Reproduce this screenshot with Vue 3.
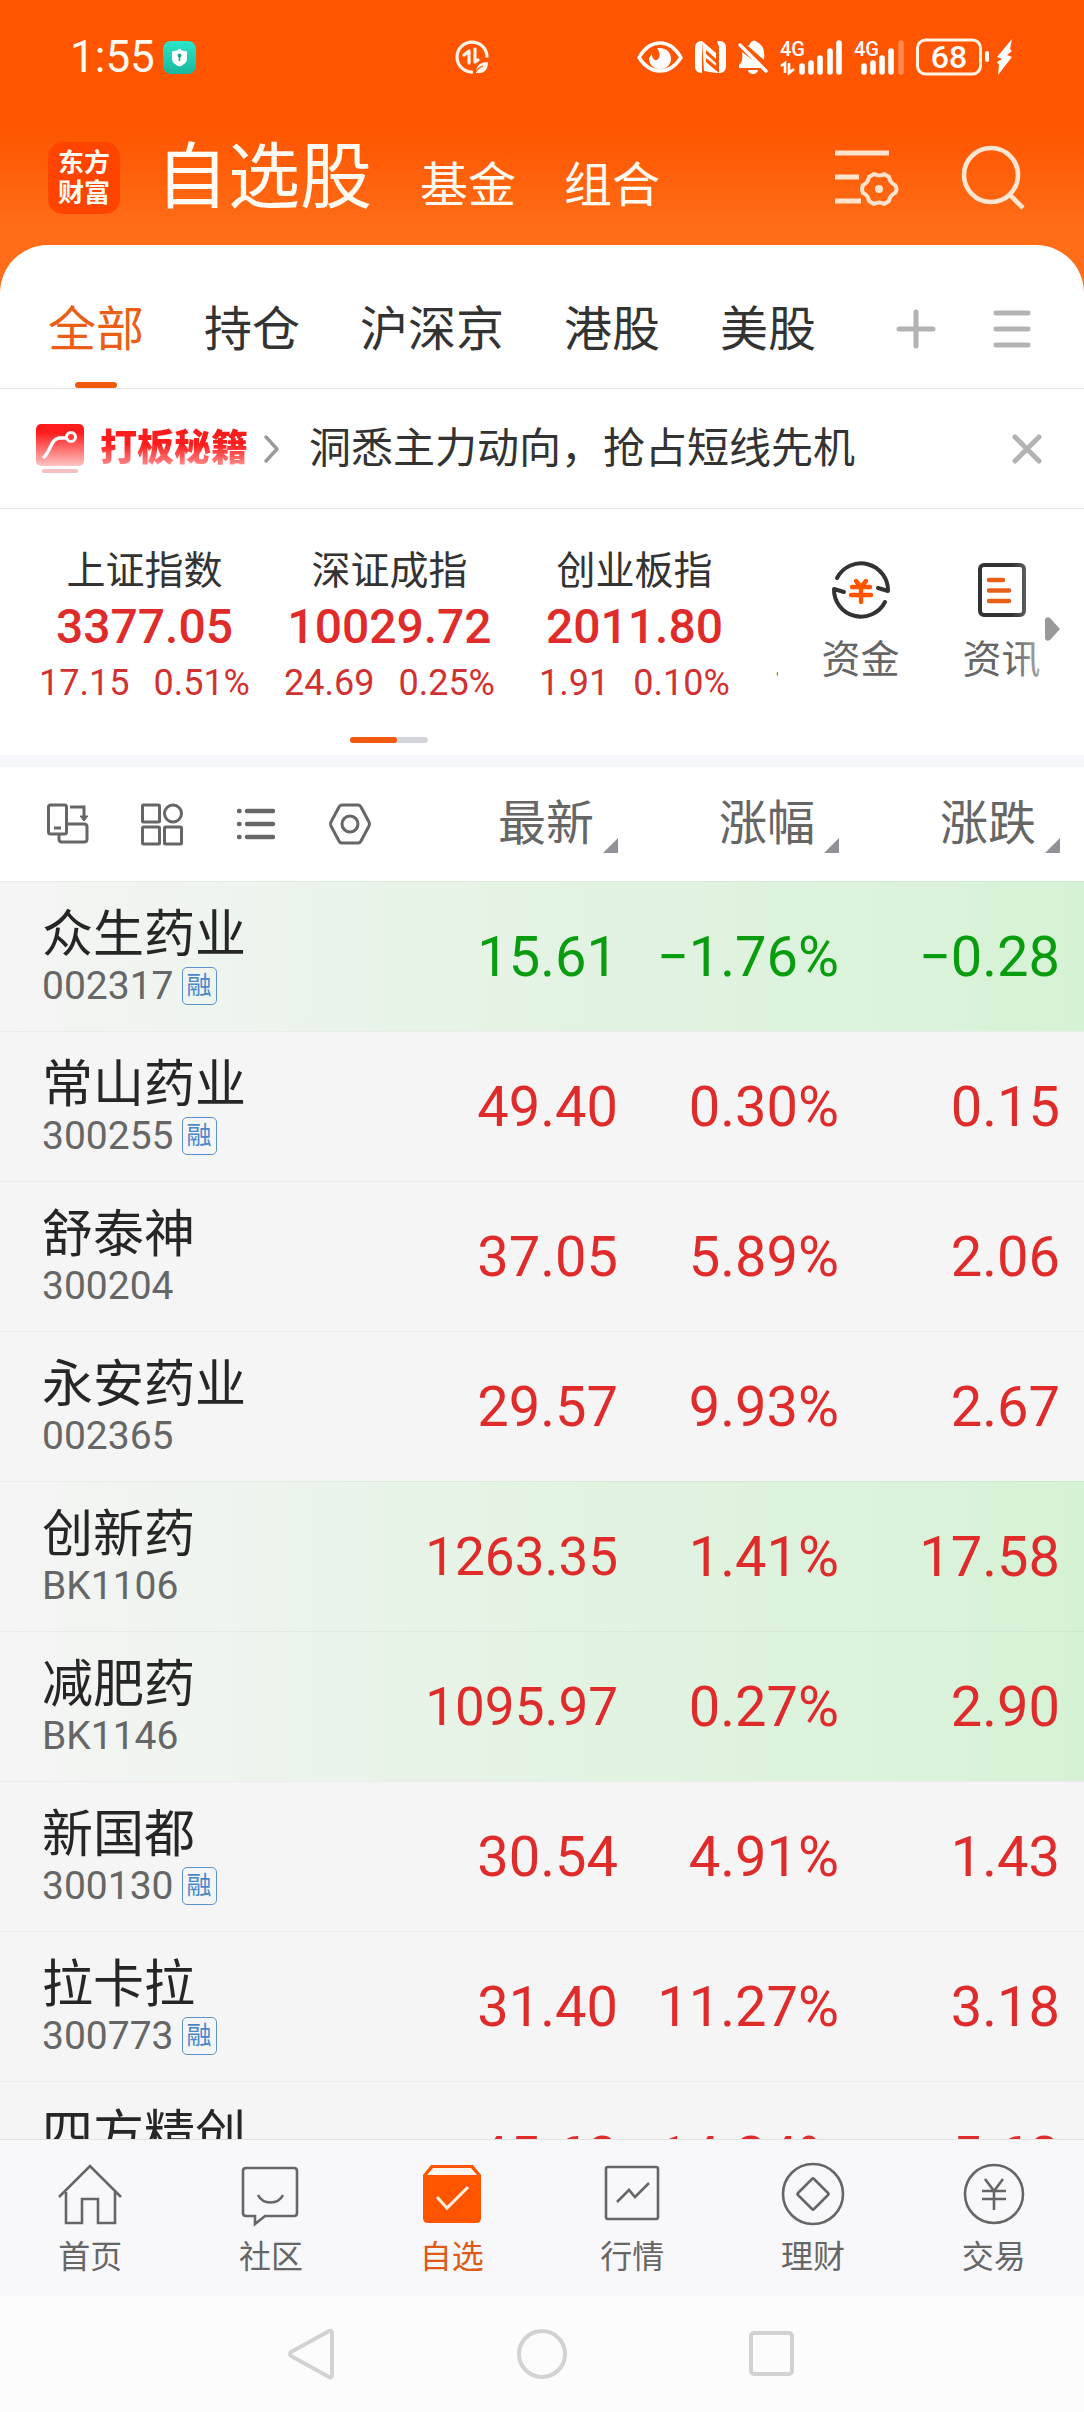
<template>
  <div class="page">
    <header class="top">
      <div class="status">
        <span class="clock">1:55</span>
        <svg class="guard" width="33" height="33" viewBox="0 0 33 33">
          <defs>
            <linearGradient id="guard-bg" x1="0" y1="0" x2="0" y2="1">
              <stop offset="0" stop-color="#2ce6cb" />
              <stop offset="1" stop-color="#17b79c" />
            </linearGradient>
          </defs>
          <rect width="33" height="33" rx="8" fill="url(#guard-bg)" />
          <path d="M16.5 7.5l2.5 2 5 1v7c0 4-3.500 6.500-7.500 8-4-1.500-7.500-4-7.500-8v-7l5-1z" fill="#fff" />
          <circle cx="16.500" cy="14.500" r="2" fill="#17a88f" />
          <path d="M16.500 15v5" stroke="#17a88f" stroke-width="1.600" />
        </svg>
        <svg class="saver" width="34" height="34" viewBox="0 0 34 34" fill="none" stroke="#fff5ea" stroke-width="3.200">
          <path d="M32 17.500A15 15 0 1 0 18 32" />
          <path d="M9 15l5-4v12M20 9v13l3-2" stroke-linejoin="round" stroke-linecap="round" />
          <path d="M21 32c0-6 4-10 12-10 0 8-4 12-12 11z" fill="#fff5ea" stroke="none" />
          <path d="M20 33c2-4 5-6 8-7" stroke="#ff5500" stroke-width="1.300" />
        </svg>
        <div class="status-right">
          <svg width="46" height="32" viewBox="0 0 46 32">
            <path d="M2 16.500C8 6 15 2 23 2s15 4 21 14.500C38 26 31 30 23 30S8 26 2 16.500z" fill="none" stroke="#fff" stroke-width="3.400" stroke-linejoin="round" />
            <path d="M20 7c10-1 14 5 14 11 0 5-4 10-11 10s-11-5-11-11l3-4c0 4 2 6 4 6 4 0 5-7 1-12z" fill="#fff" />
          </svg>
          <svg width="31" height="32" viewBox="0 0 31 32">
            <path d="M6 0h1v32H6a6 6 0 0 1-6-6V6a6 6 0 0 1 6-6zM22 0h3a6 6 0 0 1 6 6v20a6 6 0 0 1-6 6h-1V6z" fill="#fff" />
            <path d="M7 0l14 12v6L11 9v4l10 9v3l-10-8v4l13 11h-3L9 30z" fill="#fff" />
          </svg>
          <svg width="30" height="34" viewBox="0 0 30 34">
            <path d="M4 12l21 16H1v-3c3-2 4-7 3-13zM10 6c2-1 2-3 3-4 2-2 4-2 6 0 6 3 8 8 7 18zM10 30h10a5 4 0 0 1-10 0z" fill="#fff" />
            <path d="M2 5l26 26" stroke="#fff" stroke-width="3.400" stroke-linecap="round" />
          </svg>
          <svg width="62" height="36" viewBox="0 0 62 36">
            <text x="0" y="17" class="net">4G</text>
            <path d="M1 27l4-3v10M9 24v10l5-4" fill="none" stroke="#fff" stroke-width="2.600" />
            <path d="M22 27v6M31 24v9M40 19v14M50 12v21M59 4v29" stroke="#fff" stroke-width="5.600" stroke-linecap="round" />
          </svg>
          <svg width="50" height="36" viewBox="0 0 50 36">
            <text x="0" y="17" class="net">4G</text>
            <path d="M10 27v6M19 24v9M28 19v14M37 12v21" stroke="#fff" stroke-width="5.600" stroke-linecap="round" />
            <path d="M47 4v29" stroke="#fff" stroke-opacity=".3" stroke-width="5.600" stroke-linecap="round" />
          </svg>
          <svg width="74" height="38" viewBox="0 0 74 38">
            <rect x="1.500" y="2" width="63" height="34" rx="8" fill="none" stroke="#fff3e6" stroke-width="3" />
            <rect x="69" y="13" width="4" height="11" rx="2" fill="#fff" />
            <text x="33" y="30" class="level">68</text>
          </svg>
          <svg class="bolt" width="17" height="38" viewBox="0 0 17 38">
            <path d="M16 1L1 19l5 2-5 3 2 3-1 10 14-18-5-2 5-4-2-2z" fill="#fff" />
          </svg>
        </div>
      </div>

      <div class="titlebar">
        <span class="logo">东方<br />财富</span>
        <nav class="titles">
          <a href="#" class="title current">自选股</a>
          <a href="#" class="title">基金</a>
          <a href="#" class="title">组合</a>
        </nav>
        <div class="title-actions">
          <button type="button" aria-label="设置">
            <svg width="64" height="64" viewBox="0 0 64 64" fill="none" stroke="#ffe3cd" stroke-width="5">
              <path d="M1 7h54M1 31h24M1 55h26" />
              <path d="M40 28q6 3 10 0l5 3q1 6 6 8 3 4 0 8-5 2-6 8l-5 3q-5-3-10 0l-5-3q-1-6-6-8-2-4 0-8 5-2 6-8z" stroke-width="4" stroke-linejoin="round" />
              <circle cx="45" cy="43" r="4" fill="#ffe3cd" stroke="none" />
            </svg>
          </button>
          <button type="button" aria-label="搜索">
            <svg width="64" height="64" viewBox="0 0 64 64" fill="none" stroke="#ffe6d2" stroke-width="4.600">
              <circle cx="31" cy="29" r="27" />
              <path d="M49 48l14 14" />
            </svg>
          </button>
        </div>
      </div>
    </header>

    <main class="panel">
      <nav class="tabs">
        <button
          v-for="tab in tabs"
          :key="tab"
          type="button"
          class="tab"
          :class="{ active: tab === activeTab }"
          @click="activeTab = tab"
        >
          {{ tab }}
        </button>
        <div class="tab-actions">
          <button type="button" aria-label="添加分组">
            <svg width="40" height="40" viewBox="0 0 40 40" class="line-icon">
              <path d="M20 3v34M3 20h34" />
            </svg>
          </button>
          <button type="button" aria-label="分组管理">
            <svg width="40" height="40" viewBox="0 0 40 40" class="line-icon">
              <path d="M4 4h32M4 20h32M4 36h32" />
            </svg>
          </button>
        </div>
      </nav>

      <div v-if="showBanner" class="banner">
        <a href="#" class="banner-link">
          <svg width="48" height="49" viewBox="0 0 48 49">
            <defs>
              <linearGradient id="tip-bg" x1="0" y1="0" x2="0" y2="1">
                <stop offset=".2" stop-color="#ff1c1c" />
                <stop offset="1" stop-color="#ffc4c4" />
              </linearGradient>
            </defs>
            <rect width="48" height="42" rx="5" fill="url(#tip-bg)" />
            <path d="M8 33c7-6 6-17 15-19h8" fill="none" stroke="#fff" stroke-width="3.400" stroke-linecap="round" />
            <circle cx="35" cy="13" r="4.500" fill="#ff3b3b" stroke="#fff" stroke-width="3" />
            <rect x="6" y="45" width="36" height="4" rx="2" fill="#f7bfc1" />
          </svg>
          <span class="banner-brand">打板秘籍</span>
          <svg width="15" height="28" viewBox="0 0 15 28" fill="none" stroke="#999" stroke-width="3.400" stroke-linecap="round" stroke-linejoin="round">
            <path d="M2 2l11 12L2 26" />
          </svg>
          <span class="banner-text">洞悉主力动向，抢占短线先机</span>
        </a>
        <button type="button" aria-label="关闭" @click="showBanner = false">
          <svg width="30" height="30" viewBox="0 0 30 30" class="line-icon">
            <path d="M3 3l24 24M27 3L3 27" />
          </svg>
        </button>
      </div>

      <section class="market">
        <div class="indices">
          <div class="index-list">
            <a v-for="item in indices" :key="item.name" href="#" class="index">
              <span class="index-name">{{ item.name }}</span>
              <span class="index-value">{{ item.value }}</span>
              <span class="index-change">
                <span>{{ item.change }}</span>
                <span>{{ item.percent }}</span>
              </span>
            </a>
          </div>
          <div class="pager"><span></span></div>
        </div>
        <div class="shortcuts">
          <a href="#" class="shortcut">
            <svg width="58" height="58" viewBox="0 0 58 58" fill="none" stroke-linecap="round" stroke-linejoin="round">
              <path d="M5 17A27 27 0 0 1 56 30l-10-3M53 41A27 27 0 0 1 2 28l10 3" stroke="#333" stroke-width="4" />
              <path d="M24 20l5 6 5-6M20 26h18M19 34h20M29 26v15" stroke="#ff5500" stroke-width="4.400" />
            </svg>
            <span>资金</span>
          </a>
          <a href="#" class="shortcut">
            <svg width="58" height="58" viewBox="0 0 58 58" fill="none">
              <rect x="7" y="4" width="44" height="50" rx="4" stroke="#333" stroke-width="4" />
              <path d="M16 19h14M16 29.500h20M16 40h20" stroke="#e6601a" stroke-width="4.400" stroke-linecap="round" />
            </svg>
            <span>资讯</span>
          </a>
          <svg class="more" width="15" height="24" viewBox="0 0 15 24">
            <path d="M0 2q2-3 5-1l10 11L5 23q-3 2-5-1z" fill="#999" />
          </svg>
        </div>
      </section>

      <div class="quotes">
        <table>
          <colgroup>
            <col />
            <col class="col-num" />
            <col class="col-num" />
            <col class="col-last" />
          </colgroup>
          <thead>
            <tr>
              <th>
                <div class="tools">
                  <button type="button" aria-label="横屏">
                    <svg width="42" height="42" viewBox="0 0 42 42" class="tool-icon">
                      <rect x="1.500" y="2" width="18" height="29" rx="2" />
                      <path d="M7 25h7M12 31v5q0 3 3 3h22q3 0 3-3V24q0-3-3-3H20M23 4h14v11" />
                      <path d="M33 13h8l-4 5z" fill="#666" stroke-width="1" />
                    </svg>
                  </button>
                  <button type="button" aria-label="宫格">
                    <svg width="42" height="42" viewBox="0 0 42 42" class="tool-icon">
                      <rect x="1.500" y="2" width="17" height="17" rx="1" />
                      <circle cx="32" cy="10.500" r="8.500" />
                      <rect x="1.500" y="24" width="17" height="17" rx="1" />
                      <rect x="23.500" y="24" width="17" height="17" rx="1" />
                    </svg>
                  </button>
                  <button type="button" aria-label="列表">
                    <svg width="42" height="42" viewBox="0 0 42 42" class="tool-icon round">
                      <path d="M12 8h26M12 21h26M12 34h26M4 8h.5M4 21h.5M4 34h.5" />
                    </svg>
                  </button>
                  <button type="button" aria-label="表头设置">
                    <svg width="42" height="42" viewBox="0 0 42 42" class="tool-icon">
                      <path d="M13 2h16q2 0 3 2l8 15q1 2 0 4l-8 15q-1 2-3 2H13q-2 0-3-2L2 23q-1-2 0-4l8-15q1-2 3-2z" />
                      <circle cx="21" cy="21" r="8" />
                    </svg>
                  </button>
                </div>
              </th>
              <th v-for="column in columns" :key="column" scope="col">
                <button type="button" class="sort">
                  {{ column }}
                  <svg width="15" height="15" viewBox="0 0 15 15"><path d="M15 0v15H0z" fill="#919197" /></svg>
                </button>
              </th>
            </tr>
          </thead>
          <tbody>
            <tr v-for="stock in stocks" :key="stock.code" :class="{ flash: stock.flash, down: stock.down }">
              <td>
                <div class="stock-name">{{ stock.name }}</div>
                <div class="stock-code">
                  {{ stock.code }}
                  <span v-if="stock.margin" class="badge">融</span>
                </div>
              </td>
              <td class="num" :class="{ long: stock.price.length > 6 }">{{ stock.price }}</td>
              <td class="num">{{ stock.percent }}</td>
              <td class="num">{{ stock.change }}</td>
            </tr>
          </tbody>
        </table>
      </div>
    </main>

    <nav class="bottom-nav">
      <a href="#">
        <svg width="64" height="64" viewBox="0 0 64 64" class="nav-icon">
          <path d="M1 35L32 4l31 31M8 30v31h16V37h16v24h17V30" />
        </svg>
        首页
      </a>
      <a href="#">
        <svg width="64" height="64" viewBox="0 0 64 64" class="nav-icon">
          <path d="M7 6h48q3 0 3 3v42q0 3-3 3H26l-10 8v-8H7q-3 0-3-3V9q0-3 3-3z" />
          <path d="M19 33c5 10 20 10 25 0" />
        </svg>
        社区
      </a>
      <a href="#" class="current">
        <svg width="64" height="64" viewBox="0 0 64 64">
          <path d="M11 3h42l8 10v43q0 5-5 5H8q-5 0-5-5V13z" fill="#ff5500" />
          <path d="M13 6h38l6 7H7z" fill="#fff6ee" />
          <path d="M17 35l10 11 21-21" fill="none" stroke="#fff0e2" stroke-width="3" />
        </svg>
        自选
      </a>
      <a href="#">
        <svg width="64" height="64" viewBox="0 0 64 64" class="nav-icon">
          <rect x="6" y="5" width="52" height="52" rx="2" />
          <path d="M17 40l12-12 6 7 14-14" />
        </svg>
        行情
      </a>
      <a href="#">
        <svg width="64" height="64" viewBox="0 0 64 64" class="nav-icon">
          <circle cx="32" cy="32" r="30" />
          <path d="M31 17q1-1 2 0l14 14q1 1 0 2L33 47q-1 1-2 0L17 33q-1-1 0-2z" />
        </svg>
        理财
      </a>
      <a href="#">
        <svg width="64" height="64" viewBox="0 0 64 64" class="nav-icon">
          <circle cx="32" cy="32" r="29" />
          <path d="M23 17l9 12 9-12M20 29h24M20 37h24M32 28v20" />
        </svg>
        交易
      </a>
    </nav>

    <div class="system-bar">
      <button type="button" aria-label="返回">
        <svg width="50" height="50" viewBox="0 0 50 50"><path d="M42 2q3-1 3 2v42q0 3-3 2L4 27q-2-2 0-4z" /></svg>
      </button>
      <button type="button" aria-label="主屏幕">
        <svg width="50" height="50" viewBox="0 0 50 50"><circle cx="25" cy="25" r="23" /></svg>
      </button>
      <button type="button" aria-label="最近任务">
        <svg width="50" height="50" viewBox="0 0 50 50"><rect x="4" y="4" width="41" height="41" rx="3" /></svg>
      </button>
    </div>
  </div>
</template>

<script setup>
import { ref } from "vue"

const tabs = ["全部", "持仓", "沪深京", "港股", "美股"]
const activeTab = ref("全部")
const showBanner = ref(true)

const indices = [
  { name: "上证指数", value: "3377.05", change: "17.15", percent: "0.51%" },
  { name: "深证成指", value: "10029.72", change: "24.69", percent: "0.25%" },
  { name: "创业板指", value: "2011.80", change: "1.91", percent: "0.10%" },
  { name: "沪深300", value: "3884.39", change: "14.16", percent: "0.37%" },
]

const columns = ["最新", "涨幅", "涨跌"]

const stocks = [
  { name: "众生药业", code: "002317", margin: true, price: "15.61", percent: "−1.76%", change: "−0.28", down: true, flash: true },
  { name: "常山药业", code: "300255", margin: true, price: "49.40", percent: "0.30%", change: "0.15" },
  { name: "舒泰神", code: "300204", price: "37.05", percent: "5.89%", change: "2.06" },
  { name: "永安药业", code: "002365", price: "29.57", percent: "9.93%", change: "2.67" },
  { name: "创新药", code: "BK1106", price: "1263.35", percent: "1.41%", change: "17.58", flash: true },
  { name: "减肥药", code: "BK1146", price: "1095.97", percent: "0.27%", change: "2.90", flash: true },
  { name: "新国都", code: "300130", margin: true, price: "30.54", percent: "4.91%", change: "1.43" },
  { name: "拉卡拉", code: "300773", margin: true, price: "31.40", percent: "11.27%", change: "3.18" },
  { name: "四方精创", code: "300468", margin: true, price: "45.60", percent: "14.24%", change: "5.68" },
]
</script>

<style>
body {
  background: #fcfcfc;
}
</style>

<style scoped>
.page {
  display: flex;
  flex-direction: column;
  height: 100vh;
  overflow: hidden;
  font-family: Roboto, "Noto Sans CJK SC", sans-serif;
  color: #333;
}

a {
  color: inherit;
  text-decoration: none;
}

button {
  padding: 0;
  border: none;
  background: none;
  font: inherit;
  color: inherit;
}

svg {
  display: block;
  flex-shrink: 0;
  overflow: visible;
}

.top {
  padding-bottom: 75px;
  background: linear-gradient(#ff5500 125px, #ff6d18 230px);
  color: #fffaf2;
}

.status {
  display: flex;
  align-items: center;
  height: 42px;
  padding: 36px 71px 60px 70px;
}

.clock {
  font-size: 44px;
  line-height: 42px;
}

.guard {
  margin-left: 8px;
}

.saver {
  margin-left: auto;
  margin-right: 148px;
}

.status-right {
  display: flex;
  align-items: center;
  gap: 12px;
}

.bolt {
  margin-left: -6px;
}

.net {
  fill: #fff;
  font-size: 20px;
  font-weight: 500;
}

.level {
  fill: #fff;
  font-size: 32px;
  font-weight: 500;
  text-anchor: middle;
}

.titlebar {
  display: flex;
  align-items: center;
  height: 80px;
  padding: 0 60px 0 48px;
}

.logo {
  width: 72px;
  padding: 6px 0;
  border-radius: 15px;
  background: #ff4400;
  font-size: 26px;
  font-weight: 700;
  line-height: 30px;
  text-align: center;
}

.titles {
  display: flex;
  align-items: baseline;
  gap: 48px;
  margin-left: 36px;
}

.title {
  font-size: 48px;
  line-height: 48px;
}

.title.current {
  font-size: 72px;
  line-height: 80px;
}

.title-actions {
  display: flex;
  gap: 62px;
  margin-left: auto;
}

.panel {
  display: flex;
  flex-direction: column;
  flex: 1;
  min-height: 0;
  margin-top: -48px;
  border-radius: 48px 48px 0 0;
  background: #fff;
  overflow: hidden;
}

.tabs {
  display: flex;
  gap: 60px;
  padding: 0 52px 0 48px;
  border-bottom: 1px solid #e3e3e3;
}

.tab {
  position: relative;
  padding: 55px 0 28px;
  font-size: 48px;
  line-height: 60px;
}

.tab.active {
  color: #ea5e16;
}

.tab.active::after {
  content: "";
  position: absolute;
  left: 50%;
  bottom: 0;
  width: 42px;
  height: 6px;
  margin-left: -21px;
  border-radius: 3px;
  background: #f0590e;
}

.tab-actions {
  display: flex;
  align-items: center;
  gap: 56px;
  margin-left: auto;
  padding: 55px 0 31px;
}

.line-icon {
  fill: none;
  stroke: #b3b3b3;
  stroke-width: 5;
  stroke-linecap: round;
}

.banner {
  display: flex;
  align-items: center;
  justify-content: space-between;
  height: 119px;
  padding: 0 42px 0 36px;
  border-bottom: 1px solid #e3e3e3;
}

.banner-link {
  display: flex;
  align-items: center;
  gap: 16px;
}

.banner-brand {
  font-size: 37px;
  font-weight: 900;
  line-height: 48px;
  background: linear-gradient(#ff1c1c 40%, #f99 90%);
  background-clip: text;
  color: transparent;
}

.banner-text {
  margin-left: 14px;
  font-size: 42px;
  line-height: 60px;
}

.market {
  display: flex;
  border-bottom: 12px solid #f5f7fa;
}

.indices {
  flex: 1;
  min-width: 0;
  padding: 34px 0 12px;
  overflow: hidden;
}

.index-list {
  display: flex;
  padding-left: 22px;
}

.index {
  display: flex;
  flex-direction: column;
  align-items: center;
  flex: 0 0 245px;
  line-height: 56px;
  color: #e02b2b;
}

.index-name {
  font-size: 39px;
  color: #333;
}

.index-value {
  font-size: 48px;
  font-weight: 500;
}

.index-change {
  display: flex;
  gap: 24px;
  font-size: 36px;
  color: #d03232;
}

.pager {
  width: 78px;
  height: 6px;
  margin: 26px auto 0;
  border-radius: 3px;
  background: #d3d5da;
}

.pager span {
  display: block;
  width: 60%;
  height: 100%;
  border-radius: 3px;
  background: #f0590e;
}

.shortcuts {
  position: relative;
  display: flex;
  width: 294px;
  padding: 52px 0 0 12px;
}

.shortcuts::after {
  content: "";
  position: absolute;
  top: 0;
  right: 0;
  width: 72px;
  height: 100%;
  background: linear-gradient(to right, transparent, #fff 90%);
}

.shortcut {
  display: flex;
  flex-direction: column;
  align-items: center;
  gap: 17px;
  width: 141px;
  font-size: 39px;
  line-height: 48px;
  color: #666;
}

.more {
  position: absolute;
  top: 108px;
  right: 24px;
  z-index: 1;
}

.quotes {
  flex: 1;
  min-height: 0;
  overflow: hidden;
  background: #f5f5f5;
}

table {
  width: 100%;
  table-layout: fixed;
  border-spacing: 0;
}

.col-num {
  width: 221px;
}

.col-last {
  width: 245px;
}

th {
  height: 114px;
  padding: 0;
  background: #fff;
  font-weight: 400;
  text-align: right;
}

th:last-child,
td:last-child {
  padding-right: 24px;
}

.tools {
  display: flex;
  gap: 52px;
  padding-left: 47px;
}

.tool-icon {
  fill: none;
  stroke: #666;
  stroke-width: 3;
}

.tool-icon.round {
  stroke-width: 4.4;
  stroke-linecap: round;
}

.sort {
  display: inline-flex;
  align-items: flex-end;
  gap: 9px;
  font-size: 48px;
  line-height: 58px;
  color: #666;
}

td {
  height: 149px;
  padding: 0;
  border-top: 1px solid rgba(0, 0, 0, 0.04);
}

td:first-child {
  padding-left: 42px;
}

.flash {
  background: linear-gradient(to right, #f5f5f5, #e2f3e2 55%, #d6f2d6);
}

.stock-name {
  font-size: 51px;
  line-height: 58px;
  color: #262626;
}

.stock-code {
  display: flex;
  align-items: center;
  gap: 8px;
  font-size: 39px;
  line-height: 44px;
  color: #666;
}

.badge {
  width: 33px;
  border: 1px solid #5b93cf;
  border-radius: 5px;
  font-size: 25px;
  line-height: 36px;
  text-align: center;
  color: #4a87c8;
}

.num {
  font-size: 56px;
  line-height: 64px;
  text-align: right;
  color: #e02b2b;
}

.num.long {
  font-size: 53px;
}

.down .num {
  color: #0a9c0f;
}

.bottom-nav {
  display: flex;
  border-top: 1px solid #e3e3e3;
  background: #f8f8fb;
}

.bottom-nav a {
  display: flex;
  flex-direction: column;
  align-items: center;
  flex: 1;
  gap: 9px;
  padding: 22px 0 17px;
  font-size: 32px;
  line-height: 44px;
  color: #666;
}

.bottom-nav .current {
  color: #dd5a18;
}

.nav-icon {
  fill: none;
  stroke: #666;
  stroke-width: 2.6;
}

.system-bar {
  display: flex;
  justify-content: center;
  gap: 180px;
  padding: 33px 0;
  background: #fcfcfc;
}

.system-bar svg {
  fill: none;
  stroke: #d2d2d2;
  stroke-width: 4;
}
</style>
